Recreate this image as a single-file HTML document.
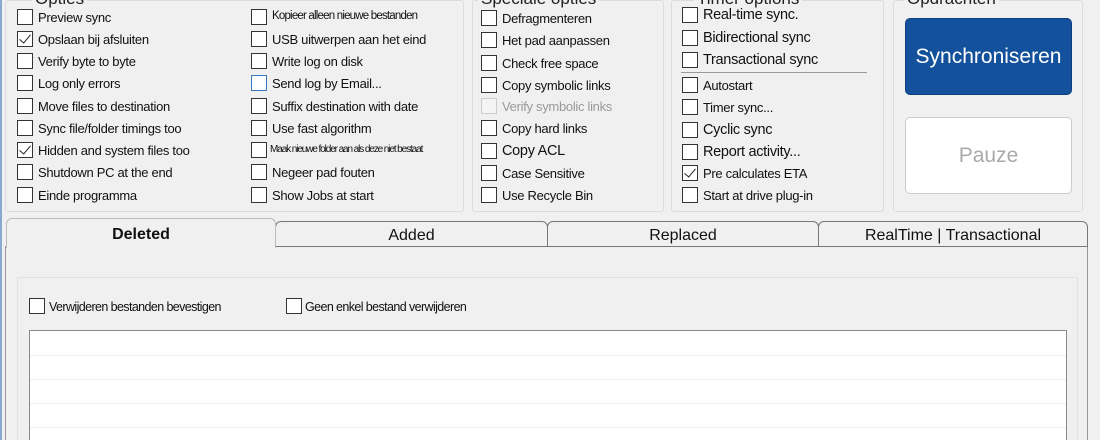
<!DOCTYPE html>
<html><head><style>
*{margin:0;padding:0;box-sizing:border-box}
html,body{width:1100px;height:440px;overflow:hidden}
body{background:#f0f0f0;font-family:"Liberation Sans",sans-serif;font-size:13px;color:#111;position:relative}
.a{position:absolute}
.g{position:absolute;border:1px solid #dcdcdc;border-radius:3px}
.t{position:absolute;font-size:17px;color:#222;top:-11px;background:#f0f0f0;padding:0 3px}
.cb{position:absolute;width:16px;height:16px;border:1px solid #333;background:#fff}
.cb.c::after{content:"";position:absolute;left:4px;top:0px;width:5px;height:10px;border:solid #222;border-width:0 1.5px 1.5px 0;transform:rotate(40deg)}
.l{position:absolute;white-space:nowrap;letter-spacing:-0.3px}
.tab{position:absolute;top:221px;height:26px;border:1px solid #777;border-bottom:1px solid #777;border-radius:6px 6px 0 0;background:#f0f0f0;text-align:center;font-size:16px;line-height:28px}
</style></head><body>
<div class="a" style="left:0;top:0;width:2px;height:440px;background:#8aa9cc"></div>
<div class="g" style="left:5px;top:0;width:459px;height:212px"></div>
<div class="t" style="left:32px">Opties</div>
<div class="g" style="left:472px;top:0;width:192px;height:212px"></div>
<div class="t" style="left:478px">Speciale opties</div>
<div class="g" style="left:671px;top:0;width:213px;height:212px"></div>
<div class="t" style="left:694px">Timer options</div>
<div class="g" style="left:893px;top:0;width:190px;height:212px"></div>
<div class="t" style="left:904px">Opdrachten</div>

<div class="cb" style="left:17px;top:9px"></div><div class="l" style="left:38px;top:10px">Preview sync</div>
<div class="cb c" style="left:17px;top:31px"></div><div class="l" style="left:38px;top:32px">Opslaan bij afsluiten</div>
<div class="cb" style="left:17px;top:53px"></div><div class="l" style="left:38px;top:54px">Verify byte to byte</div>
<div class="cb" style="left:17px;top:75px"></div><div class="l" style="left:38px;top:76px">Log only errors</div>
<div class="cb" style="left:17px;top:98px"></div><div class="l" style="left:38px;top:99px">Move files to destination</div>
<div class="cb" style="left:17px;top:120px"></div><div class="l" style="left:38px;top:121px">Sync file/folder timings too</div>
<div class="cb c" style="left:17px;top:142px"></div><div class="l" style="left:38px;top:143px">Hidden and system files too</div>
<div class="cb" style="left:17px;top:164px"></div><div class="l" style="left:38px;top:165px">Shutdown PC at the end</div>
<div class="cb" style="left:17px;top:187px"></div><div class="l" style="left:38px;top:188px">Einde programma</div>

<div class="cb" style="left:251px;top:9px"></div><div class="l" style="left:272px;top:10px;font-size:11.5px;letter-spacing:-0.8px">Kopieer alleen nieuwe bestanden</div>
<div class="cb" style="left:251px;top:31px"></div><div class="l" style="left:272px;top:32px">USB uitwerpen aan het eind</div>
<div class="cb" style="left:251px;top:53px"></div><div class="l" style="left:272px;top:54px">Write log on disk</div>
<div class="cb" style="left:251px;top:75px;border-color:#3a76c4"></div><div class="l" style="left:272px;top:76px">Send log by Email...</div>
<div class="cb" style="left:251px;top:98px"></div><div class="l" style="left:272px;top:99px">Suffix destination with date</div>
<div class="cb" style="left:251px;top:120px"></div><div class="l" style="left:272px;top:121px">Use fast algorithm</div>
<div class="cb" style="left:251px;top:142px"></div><div class="l" style="left:270px;top:144px;font-size:10px;letter-spacing:-1.1px">Maak nieuwe folder aan als deze niet bestaat</div>
<div class="cb" style="left:251px;top:164px"></div><div class="l" style="left:272px;top:165px">Negeer pad fouten</div>
<div class="cb" style="left:251px;top:187px"></div><div class="l" style="left:272px;top:188px">Show Jobs at start</div>

<div class="cb" style="left:481px;top:10px"></div><div class="l" style="left:502px;top:11px">Defragmenteren</div>
<div class="cb" style="left:481px;top:32px"></div><div class="l" style="left:502px;top:33px">Het pad aanpassen</div>
<div class="cb" style="left:481px;top:55px"></div><div class="l" style="left:502px;top:56px">Check free space</div>
<div class="cb" style="left:481px;top:77px"></div><div class="l" style="left:502px;top:78px">Copy symbolic links</div>
<div class="cb" style="left:481px;top:98px;border-color:#ccc;background:#f4f4f4"></div><div class="l" style="left:502px;top:99px;color:#999">Verify symbolic links</div>
<div class="cb" style="left:481px;top:120px"></div><div class="l" style="left:502px;top:121px">Copy hard links</div>
<div class="cb" style="left:481px;top:143px"></div><div class="l" style="left:502px;top:143px;font-size:14.5px">Copy ACL</div>
<div class="cb" style="left:481px;top:165px"></div><div class="l" style="left:502px;top:166px">Case Sensitive</div>
<div class="cb" style="left:481px;top:187px"></div><div class="l" style="left:502px;top:188px">Use Recycle Bin</div>

<div class="cb" style="left:682px;top:7px"></div><div class="l" style="left:703px;top:7px;font-size:14.5px">Real-time sync.</div>
<div class="cb" style="left:682px;top:30px"></div><div class="l" style="left:703px;top:30px;font-size:14.5px">Bidirectional sync</div>
<div class="cb" style="left:682px;top:52px"></div><div class="l" style="left:703px;top:52px;font-size:14.5px">Transactional sync</div>
<div class="a" style="left:681px;top:72px;width:186px;height:1px;background:#999"></div>
<div class="cb" style="left:682px;top:77px"></div><div class="l" style="left:703px;top:78px">Autostart</div>
<div class="cb" style="left:682px;top:99px"></div><div class="l" style="left:703px;top:100px">Timer sync...</div>
<div class="cb" style="left:682px;top:122px"></div><div class="l" style="left:703px;top:122px;font-size:14.5px">Cyclic sync</div>
<div class="cb" style="left:682px;top:144px"></div><div class="l" style="left:703px;top:144px;font-size:14.5px">Report activity...</div>
<div class="cb c" style="left:682px;top:165px"></div><div class="l" style="left:703px;top:166px">Pre calculates ETA</div>
<div class="cb" style="left:682px;top:187px"></div><div class="l" style="left:703px;top:188px">Start at drive plug-in</div>

<div class="a" style="left:905px;top:18px;width:167px;height:77px;background:#13519c;border:1px solid #0c3f80;border-radius:5px;color:#fff;font-size:21px;text-align:center;line-height:75px">Synchroniseren</div>
<div class="a" style="left:905px;top:117px;width:167px;height:77px;background:#fff;border:1px solid #ccc;border-radius:5px;color:#aaa;font-size:21px;text-align:center;line-height:75px">Pauze</div>

<div class="a" style="left:5px;top:246px;width:1083px;height:194px;border:1px solid #999;border-bottom:none;background:#f0f0f0"></div>
<div class="tab" style="left:275px;width:273px">Added</div>
<div class="tab" style="left:547px;width:272px">Replaced</div>
<div class="tab" style="left:818px;width:270px">RealTime | Transactional</div>
<div class="tab" style="left:6px;top:218px;width:270px;height:30px;border-bottom:none;font-weight:bold;border-color:#bbb;line-height:31px">Deleted</div>
<div class="a" style="left:17px;top:277px;width:1061px;height:163px;border:1px solid #e2e2e2;border-bottom:none;background:#f0f0f0"></div>
<div class="cb" style="left:29px;top:298px"></div><div class="l" style="left:49px;top:300px;font-size:12.5px;letter-spacing:-0.6px">Verwijderen bestanden bevestigen</div>
<div class="cb" style="left:286px;top:298px"></div><div class="l" style="left:305px;top:300px;font-size:12.5px;letter-spacing:-0.6px">Geen enkel bestand verwijderen</div>
<div class="a" style="left:29px;top:330px;width:1038px;height:110px;background:#fff;border:1px solid #888;border-bottom:none"></div>
<div class="a" style="left:30px;top:355px;width:1036px;height:1px;background:#eee"></div>
<div class="a" style="left:30px;top:379px;width:1036px;height:1px;background:#eee"></div>
<div class="a" style="left:30px;top:403px;width:1036px;height:1px;background:#eee"></div>
<div class="a" style="left:30px;top:427px;width:1036px;height:1px;background:#eee"></div>
</body></html>
